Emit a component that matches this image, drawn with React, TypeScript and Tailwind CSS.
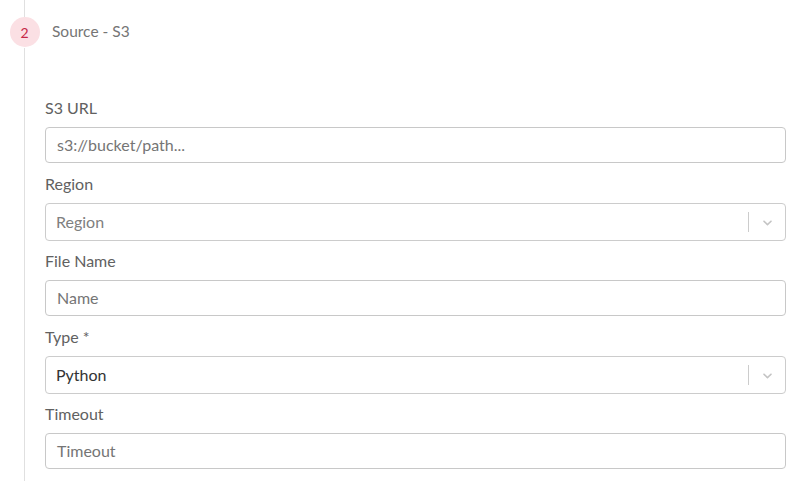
type FieldProps = {
    label: string;
    placeholder: string;
    select?: boolean;
    value?: string;
};

function Field({ label, placeholder, select, value }: FieldProps) {
    return (
        <div className="flex flex-col">
            <span className="h-5 leading-5 text-base text-[#616161]">{label}</span>
            {select ? (
                <div className="mt-[9px] h-[38px] w-full flex items-center border border-[#cccccc] rounded bg-white">
                    <span className={`flex-1 pl-[10px] text-base ${value ? "text-[#333333]" : "text-[#808080]"}`}>
                        {value || placeholder}
                    </span>
                    <span className="h-5 w-px bg-[#cccccc]"></span>
                    <div className="w-9 h-full flex justify-center items-center">
                        <svg width="15" height="15" viewBox="0 0 20 20" fill="#c4c4c4">
                            <path d="M4.516 7.548c.436-.446 1.043-.481 1.576 0L10 11.295l3.908-3.747c.533-.481 1.141-.446 1.574 0 .436.445.408 1.197 0 1.615-.406.418-4.695 4.502-4.695 4.502a1.095 1.095 0 0 1-1.576 0S4.924 9.581 4.516 9.163s-.436-1.170 0-1.615z" />
                        </svg>
                    </div>
                </div>
            ) : (
                <div className="mt-[9px] h-9 w-full flex items-center border border-[#c8c8c8] rounded bg-white">
                    <span className="pl-[11px] text-base text-[#757575]">{placeholder}</span>
                </div>
            )}
        </div>
    );
}

export default function App() {
    return (
        <div className="w-[803px] h-[481px] bg-white overflow-hidden font-['Lato','Noto_Sans',sans-serif]">
            {/* step header */}
            <div className="flex">
                <div className="w-[49px] flex flex-col items-center">
                    <div className="w-px h-[17px] bg-[#e0e0e0] mr-[1px]"></div>
                    <div className="h-[30px] w-[30px] rounded-full bg-[#fbe0e4] flex justify-center items-center text-[14px] text-[#c62848]">2</div>
                    <div className="w-px h-[434px] bg-[#e0e0e0] mr-[1px] mt-[1px]"></div>
                </div>

                <div className="flex-1 flex flex-col">
                    <div className="h-[30px] mt-[17px] flex items-center pl-[3px] text-[15.5px] text-[#757575]">Source - S3</div>

                    {/* form */}
                    <div className="mt-[51px] w-[741px] -ml-[4px] flex flex-col">
                        <Field label="S3 URL" placeholder="s3://bucket/path..." />
                        <div className="mt-[11px]">
                            <Field label="Region" placeholder="Region" select />
                        </div>
                        <div className="mt-[10px]">
                            <Field label="File Name" placeholder="Name" />
                        </div>
                        <div className="mt-[11px]">
                            <Field label="Type *" placeholder="Type" value="Python" select />
                        </div>
                        <div className="mt-[10px]">
                            <Field label="Timeout" placeholder="Timeout" />
                        </div>
                    </div>
                </div>
            </div>
        </div>
    );
}
